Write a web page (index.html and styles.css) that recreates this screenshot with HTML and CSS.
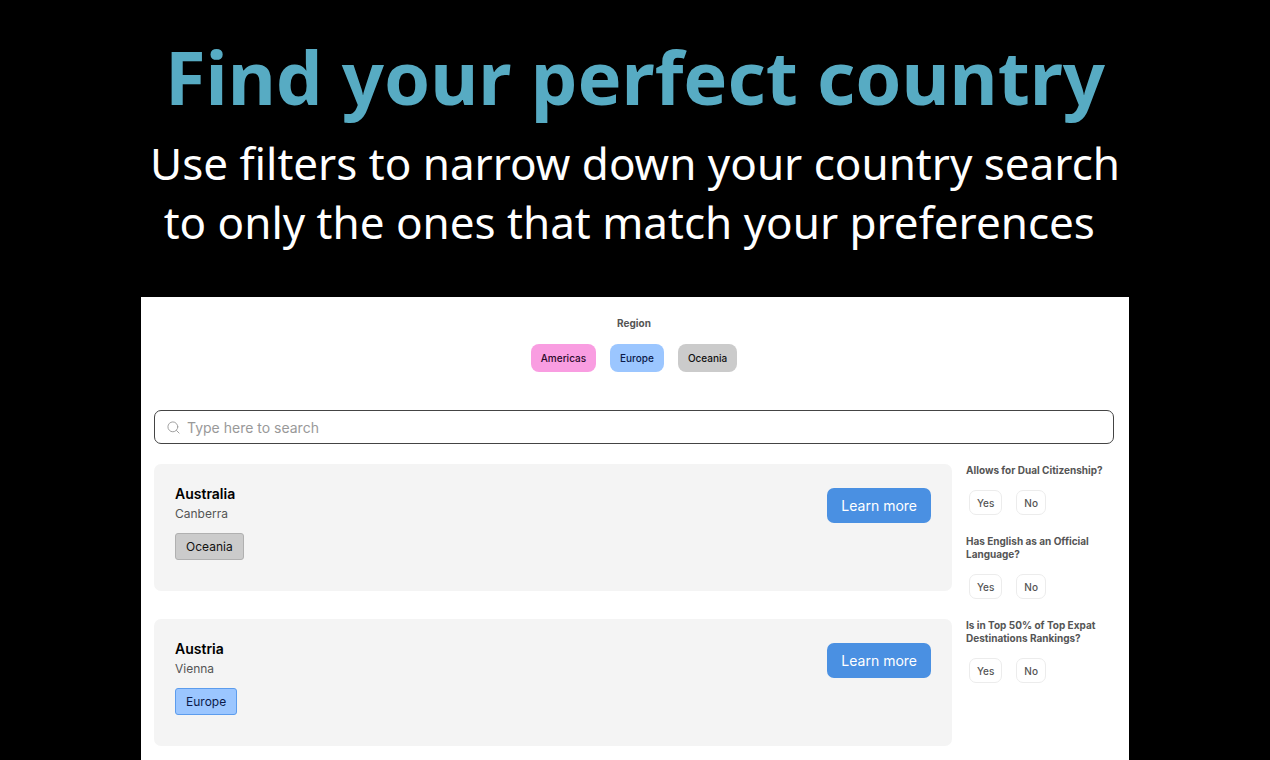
FILE: index.html
```html
<!DOCTYPE html>
<html lang="en">

<head>
  <meta charset="utf-8">
  <title>Find your perfect country</title>
  <link rel="stylesheet" href="styles.css">
</head>

<body>
  <header class="hero">
    <h1>Find your perfect country</h1>
    <p>Use filters to narrow down your country search<br>to only the ones that match your preferences&nbsp;</p>
  </header>

  <main class="panel">
    <section class="regions">
      <h2 class="filter-title">Region</h2>
      <div class="region-buttons">
        <button class="region-button americas">Americas</button>
        <button class="region-button europe">Europe</button>
        <button class="region-button oceania">Oceania</button>
      </div>
    </section>

    <label class="search">
      <svg class="search-icon" viewBox="0 0 14 14" aria-hidden="true">
        <circle cx="6.3" cy="6.3" r="5.3" />
        <path d="M10.2 10.2l2.8 2.8" />
      </svg>
      <input type="text" placeholder="Type here to search" aria-label="Search countries">
    </label>

    <div class="content">
      <div class="country-list">
        <article class="country">
          <div>
            <h3>Australia</h3>
            <p class="capital">Canberra</p>
            <span class="tag oceania">Oceania</span>
          </div>
          <button class="learn-more">Learn more</button>
        </article>

        <article class="country">
          <div>
            <h3>Austria</h3>
            <p class="capital">Vienna</p>
            <span class="tag europe">Europe</span>
          </div>
          <button class="learn-more">Learn more</button>
        </article>
      </div>

      <aside class="filters">
        <section class="filter">
          <h2 class="filter-title">Allows for Dual Citizenship?</h2>
          <div class="options">
            <button class="option">Yes</button>
            <button class="option">No</button>
          </div>
        </section>

        <section class="filter">
          <h2 class="filter-title">Has English as an Official Language?</h2>
          <div class="options">
            <button class="option">Yes</button>
            <button class="option">No</button>
          </div>
        </section>

        <section class="filter">
          <h2 class="filter-title">Is in Top 50% of Top Expat Destinations Rankings?</h2>
          <div class="options">
            <button class="option">Yes</button>
            <button class="option">No</button>
          </div>
        </section>
      </aside>
    </div>
  </main>
</body>

</html>
```
FILE: styles.css
```css
* {
  box-sizing: border-box;
}

body {
  margin: 0;
  min-height: 100vh;
  display: flex;
  flex-direction: column;
  background-color: #000;
  font-family: Inter, sans-serif;
}

h1, h2, h3, p {
  margin: 0;
}

button {
  font-family: inherit;
  cursor: pointer;
}

.hero {
  padding: 24px 0 45px;
  text-align: center;
  font-family: "Noto Sans", sans-serif;
}

.hero h1 {
  margin-bottom: 4px;
  color: #57abc3;
  font-size: 74px;
  line-height: 106px;
}

.hero p {
  color: #fff;
  font-size: 44px;
  line-height: 59px;
}

.panel {
  flex: 1;
  margin: 0 141px;
  padding: 20px 15px 14px 13px;
  background-color: #fff;
}

.regions {
  text-align: center;
}

.filter-title {
  color: #555;
  font-size: 10px;
  line-height: 13px;
  font-weight: 700;
}

.region-buttons {
  display: flex;
  justify-content: center;
  gap: 14px;
  margin-top: 14px;
}

.region-button {
  height: 28px;
  padding: 0 10px;
  border: none;
  border-radius: 8px;
  font-size: 10px;
  font-weight: 500;
}

.americas {
  background-color: #f99de1;
  color: #2b0a2b;
}

.europe {
  background-color: #9bc6ff;
  border-color: #5c9ced;
  color: #0b1a4a;
}

.oceania {
  background-color: #cbcbcb;
  border-color: #b0b0b0;
  color: #111;
}

.search {
  display: flex;
  align-items: center;
  gap: 7px;
  height: 34px;
  margin-top: 38px;
  padding: 0 12px;
  border: 1px solid #444;
  border-radius: 7px;
}

.search-icon {
  width: 13px;
  height: 13px;
  fill: none;
  stroke: #999;
  stroke-linecap: round;
}

.search input {
  flex: 1;
  padding: 0;
  border: none;
  outline: none;
  background: none;
  font-family: inherit;
  font-size: 14px;
}

.search input::placeholder {
  color: #999;
}

.content {
  display: grid;
  grid-template-columns: 1fr 148px;
  gap: 14px;
  margin-top: 20px;
}

.country-list {
  display: flex;
  flex-direction: column;
  gap: 28px;
}

.country {
  display: flex;
  justify-content: space-between;
  align-items: flex-start;
  min-height: 127px;
  padding: 20px 21px;
  border-radius: 7px;
  background-color: #f4f4f4;
}

.country h3 {
  font-size: 14px;
  line-height: 20px;
  font-weight: 600;
}

.capital {
  color: #555;
  font-size: 12px;
  line-height: 20px;
}

.tag {
  display: inline-block;
  margin-top: 9px;
  padding: 0 10px;
  border-width: 1px;
  border-style: solid;
  border-radius: 3px;
  font-size: 12px;
  line-height: 25px;
}

.learn-more {
  height: 35px;
  margin-top: 4px;
  padding: 0 14px;
  border: none;
  border-radius: 7px;
  background-color: #4a90e2;
  color: #fff;
  font-size: 14px;
}

.filter {
  margin-bottom: 20px;
}

.options {
  display: flex;
  gap: 14px;
  margin: 13px 0 0 3px;
}

.option {
  height: 25px;
  padding: 0 7px;
  border: 1px solid #ececec;
  border-radius: 7px;
  background-color: #fff;
  color: #555;
  font-size: 10px;
  font-weight: 500;
}
```
